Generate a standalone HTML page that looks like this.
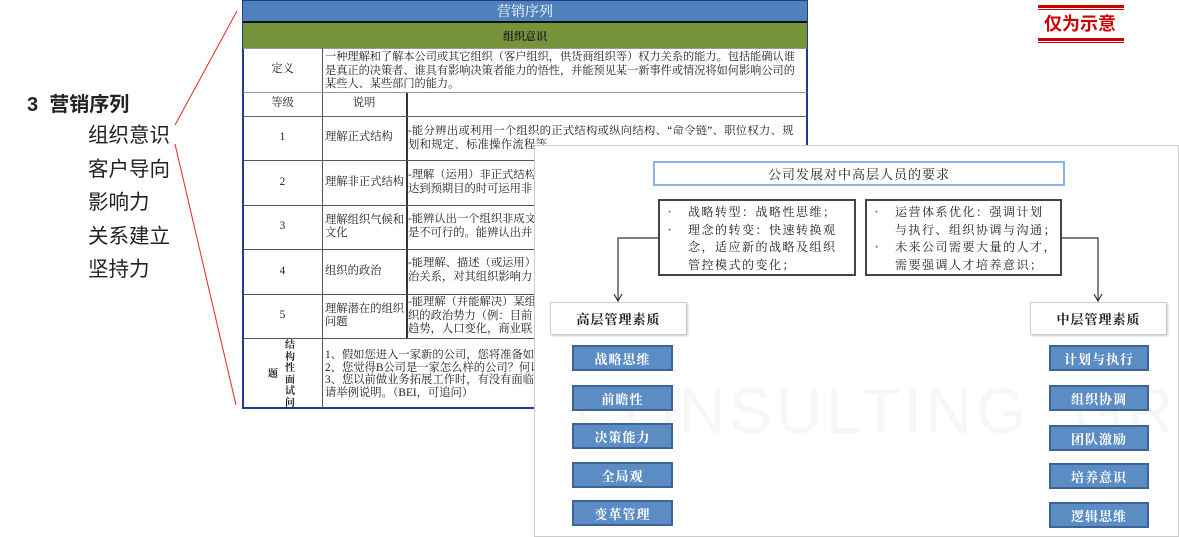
<!DOCTYPE html>
<html><head><meta charset="utf-8"><style>
*{margin:0;padding:0;box-sizing:border-box}
body{width:1179px;height:537px;background:#fff;position:relative;overflow:hidden;font-family:"Liberation Serif","Noto Serif CJK SC",serif;color:#222}
.a{position:absolute}
.c{position:absolute;font-size:11.3px;line-height:13.5px}
.nw{white-space:nowrap;overflow:hidden}
.cen{display:flex;align-items:center;justify-content:center;text-align:center}
.vl{display:flex;align-items:center}
.blu{position:absolute;background:#5b8cc4;border:2px solid #3c6494;color:#fff;font-weight:bold;font-size:13px;display:flex;align-items:center;justify-content:center;letter-spacing:1px}
.sb{position:absolute;border:1px solid #ccc;background:#fff;font-size:13px;font-weight:bold;display:flex;align-items:center;justify-content:center;letter-spacing:1px;box-shadow:1px 1px 2px #ccc}
.bb{position:absolute;border:2px solid #444;background:#fff;font-size:12px;line-height:17.5px;padding:3px 0 0 28px;white-space:nowrap;overflow:hidden}
.bb p{position:relative}
.bb p:before{content:"•";color:#e0702a;position:absolute;left:-20px;font-size:9px}
</style></head><body>
<!-- left list -->
<div class="a" style="left:27px;top:88px;font-family:'Liberation Sans','Noto Sans CJK SC',sans-serif;font-weight:bold;font-size:20px">3&nbsp; 营销序列</div>
<div class="a" style="left:88px;top:119px;font-family:'Liberation Sans','Noto Sans CJK SC',sans-serif;font-size:20.5px;line-height:33.5px">组织意识<br>客户导向<br>影响力<br>关系建立<br>坚持力</div>
<svg class="a" style="left:0;top:0" width="260" height="420"><line x1="175" y1="125" x2="237" y2="11" stroke="#e22" stroke-width="1"/><line x1="175" y1="144" x2="236" y2="405" stroke="#e22" stroke-width="1"/></svg>
<!-- table -->
<div class="a" style="left:242px;top:0;width:566px;height:409px;border:2px solid #233a8a;border-top:1px solid #233a8a;background:#fff"></div>
<div class="a cen" style="left:243px;top:1px;width:564px;height:22px;background:#4f81bd;color:#fff;font-size:14px;border-bottom:2px solid #111">营销序列</div>
<div class="a cen" style="left:243px;top:23px;width:564px;height:25px;background:#77933c;font-size:11px;font-weight:bold">组织意识</div>
<div class="a" style="left:243px;top:48px;width:564px;height:1px;background:#999"></div>
<div class="a" style="left:322px;top:48px;width:1px;height:360px;background:#555"></div>
<div class="a" style="left:406px;top:92px;width:2px;height:246px;background:#333"></div>
<div class="a" style="left:243px;top:92px;width:564px;height:1px;background:#999"></div>
<div class="a" style="left:243px;top:116px;width:564px;height:1px;background:#666"></div>
<div class="a" style="left:243px;top:160px;width:564px;height:1px;background:#555"></div>
<div class="a" style="left:243px;top:205px;width:564px;height:1px;background:#555"></div>
<div class="a" style="left:243px;top:249px;width:564px;height:1px;background:#555"></div>
<div class="a" style="left:243px;top:294px;width:564px;height:1px;background:#555"></div>
<div class="a" style="left:243px;top:338px;width:564px;height:1px;background:#555"></div>
<div class="c cen" style="left:243px;top:48px;width:79px;height:44px">定义</div>
<div class="c nw" style="left:325px;top:51px;width:481px;font-size:11.2px">一种理解和了解本公司或其它组织（客户组织，供货商组织等）权力关系的能力。包括能确认谁<br>是真正的决策者、谁具有影响决策者能力的悟性，并能预见某一新事件或情况将如何影响公司的<br>某些人、某些部门的能力。</div>
<div class="c cen" style="left:243px;top:92px;width:79px;height:24px">等级</div>
<div class="c cen" style="left:322px;top:92px;width:84px;height:24px">说明</div>
<div class="c cen" style="left:243px;top:116px;width:79px;height:44px">1</div>
<div class="c vl" style="left:325px;top:116px;width:82px;height:44px">理解正式结构</div>
<div class="c nw" style="left:408px;top:125px;width:398px;letter-spacing:0.3px">-能分辨出或利用一个组织的正式结构或纵向结构、“命令链”、职位权力、规<br>划和规定、标准操作流程等</div>
<div class="c cen" style="left:243px;top:160px;width:79px;height:45px">2</div>
<div class="c vl" style="left:325px;top:160px;width:82px;height:45px">理解非正式结构</div>
<div class="c nw" style="left:408px;top:169px;width:130px">-理解（运用）非正式结构<br>达到预期目的时可运用非</div>
<div class="c cen" style="left:243px;top:205px;width:79px;height:44px">3</div>
<div class="c vl" style="left:325px;top:205px;width:82px;height:44px">理解组织气候和文化</div>
<div class="c nw" style="left:408px;top:213px;width:130px">-能辨认出一个组织非成文<br>是不可行的。能辨认出并</div>
<div class="c cen" style="left:243px;top:249px;width:79px;height:45px">4</div>
<div class="c vl" style="left:325px;top:249px;width:82px;height:45px">组织的政治</div>
<div class="c nw" style="left:408px;top:257px;width:130px">-能理解、描述（或运用）<br>治关系，对其组织影响力</div>
<div class="c cen" style="left:243px;top:294px;width:79px;height:44px">5</div>
<div class="c vl" style="left:325px;top:294px;width:82px;height:44px">理解潜在的组织问题</div>
<div class="c nw" style="left:408px;top:296px;width:130px">-能理解（并能解决）某组<br>织的政治势力（例：目前<br>趋势，人口变化，商业联</div>
<div class="c" style="left:285px;top:340px;width:14px;font-weight:bold;font-size:10px;line-height:11.5px">结<br>构<br>性<br>面<br>试<br>问</div>
<div class="c" style="left:268px;top:368px;font-weight:bold;font-size:10px">题</div>
<div class="c nw" style="left:325px;top:349px;width:210px;line-height:12.5px">1、假如您进入一家新的公司，您将准备如<br>2、您觉得B公司是一家怎么样的公司？何以<br>3、您以前做业务拓展工作时，有没有面临<br>请举例说明。（BEI，可追问）</div>
<!-- overlay panel -->
<div class="a" style="left:534px;top:145px;width:645px;height:392px;background:#fff;border:1px solid #ccc;overflow:hidden">
<div class="a" style="left:40px;top:228px;font-family:'Liberation Sans',sans-serif;font-size:64px;color:#f7f7f7;white-space:nowrap;letter-spacing:4px">CONSULTING&nbsp;&nbsp;GROUP</div>
</div>
<div class="a cen" style="left:653px;top:161px;width:412px;height:25px;border:2px solid #8db3e2;font-size:13px;letter-spacing:1px;background:#fff">公司发展对中高层人员的要求</div>
<div class="bb" style="left:658px;top:199px;width:198px;height:77px;letter-spacing:1.5px"><p>战略转型：战略性思维；</p><p>理念的转变：快速转换观<br>念，适应新的战略及组织<br>管控模式的变化；</p></div>
<div class="bb" style="left:865px;top:199px;width:197px;height:77px;letter-spacing:1.5px"><p>运营体系优化：强调计划<br>与执行、组织协调与沟通；</p><p>未来公司需要大量的人才，<br>需要强调人才培养意识；</p></div>
<svg class="a" style="left:534px;top:145px" width="646" height="392"><path d="M124 93 H84 V155" fill="none" stroke="#333" stroke-width="1.2"/><path d="M80 149 L84 156 L88 149" fill="none" stroke="#333" stroke-width="1.2"/><path d="M528 93 H564 V155" fill="none" stroke="#333" stroke-width="1.2"/><path d="M560 149 L564 156 L568 149" fill="none" stroke="#333" stroke-width="1.2"/></svg>
<div class="sb" style="left:550px;top:302px;width:137px;height:33px">高层管理素质</div>
<div class="sb" style="left:1030px;top:302px;width:137px;height:33px">中层管理素质</div>
<div class="blu" style="left:572px;top:345px;width:101px;height:26px">战略思维</div>
<div class="blu" style="left:572px;top:385px;width:101px;height:26px">前瞻性</div>
<div class="blu" style="left:572px;top:423px;width:101px;height:26px">决策能力</div>
<div class="blu" style="left:572px;top:462px;width:101px;height:26px">全局观</div>
<div class="blu" style="left:572px;top:500px;width:101px;height:26px">变革管理</div>
<div class="blu" style="left:1049px;top:345px;width:100px;height:26px">计划与执行</div>
<div class="blu" style="left:1049px;top:385px;width:100px;height:26px">组织协调</div>
<div class="blu" style="left:1049px;top:425px;width:100px;height:26px">团队激励</div>
<div class="blu" style="left:1049px;top:463px;width:100px;height:26px">培养意识</div>
<div class="blu" style="left:1049px;top:502px;width:100px;height:26px">逻辑思维</div>
<!-- stamp -->
<div class="a" style="left:1038px;top:5px;width:86px;height:3px;background:#c00"></div>
<div class="a" style="left:1038px;top:9px;width:86px;height:1px;background:#c00"></div>
<div class="a" style="left:1044px;top:12px;font-family:'Liberation Sans','Noto Sans CJK SC',sans-serif;font-weight:bold;font-size:18px;line-height:24px;color:#c00">仅为示意</div>
<div class="a" style="left:1038px;top:38px;width:86px;height:3px;background:#c00"></div>
<div class="a" style="left:1038px;top:42px;width:86px;height:1px;background:#c00"></div>
</body></html>
